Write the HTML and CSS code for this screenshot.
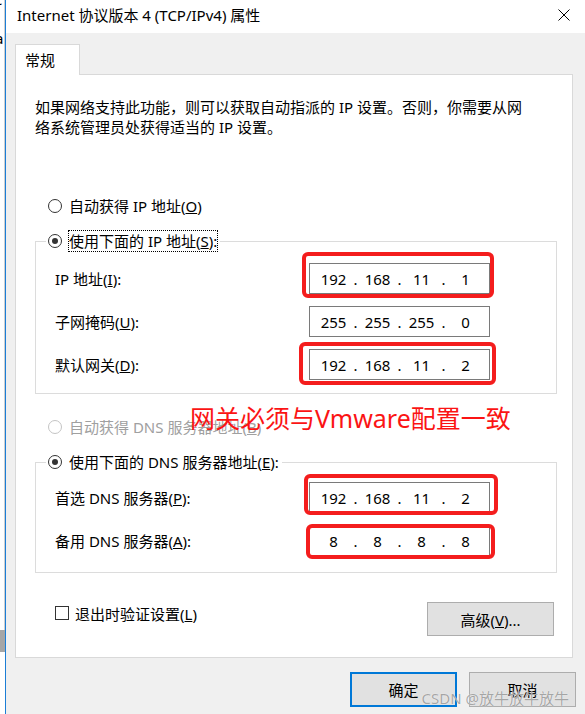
FILE: index.html
```html
<!DOCTYPE html>
<html>
<head>
    <meta charset="utf-8">
    <title>Internet 协议版本 4 (TCP/IPv4) 属性</title>
    <link rel="stylesheet" href="styles.css">
</head>
<body>
    <div class="screen">
        <div class="behind">
            <div class="behind-win">
                <span class="frag frag-c">c</span>
                <span class="frag frag-a">a</span>
            </div>
            <div class="behind-shadow"></div>
        </div>

        <div class="window">
            <div class="titlebar">
                <span class="title">Internet 协议版本 4 (TCP/IPv4) 属性</span>
                <svg class="close" width="12" height="12" viewBox="0 0 12 12">
                    <path d="M0.5 0.5 L11.5 11.5 M11.5 0.5 L0.5 11.5" stroke="#000" stroke-width="1" fill="none"/>
                </svg>
            </div>

            <div class="content">
                <div class="tabs">
                    <div class="tab">常规</div>
                </div>

                <div class="panel">
                    <p class="desc">如果网络支持此功能，则可以获取自动指派的 IP 设置。否则，你需要从网<br>络系统管理员处获得适当的 IP 设置。</p>

                    <div class="option">
                        <span class="radio"></span>
                        <span class="opt-text">自动获得 IP 地址(<u>O</u>)</span>
                    </div>

                    <div class="group">
                        <div class="option group-title">
                            <span class="radio checked"></span>
                            <span class="opt-text focus">使用下面的 IP 地址(<u>S</u>):</span>
                        </div>
                        <div class="rows">
                            <span class="label">IP 地址(<u>I</u>):</span>
                            <div class="ipbox">
                                <span class="seg">192</span><span class="dot">.</span><span class="seg">168</span><span class="dot">.</span><span class="seg">11</span><span class="dot">.</span><span class="seg">1</span>
                                <span class="mark mark-ip"></span>
                            </div>
                            <span class="label">子网掩码(<u>U</u>):</span>
                            <div class="ipbox">
                                <span class="seg">255</span><span class="dot">.</span><span class="seg">255</span><span class="dot">.</span><span class="seg">255</span><span class="dot">.</span><span class="seg">0</span>
                            </div>
                            <span class="label">默认网关(<u>D</u>):</span>
                            <div class="ipbox">
                                <span class="seg">192</span><span class="dot">.</span><span class="seg">168</span><span class="dot">.</span><span class="seg">11</span><span class="dot">.</span><span class="seg">2</span>
                                <span class="mark mark-gw"></span>
                            </div>
                        </div>
                    </div>

                    <div class="option disabled">
                        <span class="radio"></span>
                        <span class="opt-text">自动获得 DNS 服务器地址(<u>B</u>)</span>
                    </div>

                    <div class="group group-dns">
                        <div class="option group-title">
                            <span class="radio checked"></span>
                            <span class="opt-text">使用下面的 DNS 服务器地址(<u>E</u>):</span>
                        </div>
                        <div class="rows">
                            <span class="label">首选 DNS 服务器(<u>P</u>):</span>
                            <div class="ipbox">
                                <span class="seg">192</span><span class="dot">.</span><span class="seg">168</span><span class="dot">.</span><span class="seg">11</span><span class="dot">.</span><span class="seg">2</span>
                                <span class="mark mark-dns1"></span>
                            </div>
                            <span class="label">备用 DNS 服务器(<u>A</u>):</span>
                            <div class="ipbox">
                                <span class="seg">8</span><span class="dot">.</span><span class="seg">8</span><span class="dot">.</span><span class="seg">8</span><span class="dot">.</span><span class="seg">8</span>
                                <span class="mark mark-dns2"></span>
                            </div>
                        </div>
                    </div>

                    <div class="panel-foot">
                        <div class="check">
                            <span class="box"></span>
                            <span>退出时验证设置(<u>L</u>)</span>
                        </div>
                        <button class="btn btn-adv">高级(<u>V</u>)...</button>
                    </div>

                    <!-- red annotation drawn over the dialog -->
                    <div class="note">网关必须与Vmware配置一致</div>
                </div>

                <div class="actions">
                    <button class="btn btn-action btn-default">确定</button>
                    <button class="btn btn-action">取消</button>
                </div>
            </div>

            <div class="watermark">CSDN @放牛放牛放牛</div>
        </div>
    </div>
</body>
</html>
```

FILE: styles.css
```css
body {
    margin: 0;
    background: #fff;
    font-family: "Noto Sans", "Noto Sans CJK SC", sans-serif;
    font-size: 15px;
    color: #000;
}
.screen {
    display: flex;
    width: 585px;
    height: 714px;
    overflow: hidden;
}

/* sliver of the window behind */
.behind {
    width: 5px;
    flex: none;
    display: flex;
    flex-direction: column;
    overflow: hidden;
}
.behind-win {
    width: 4px;
    height: 630px;
    border-right: 1px solid #cfcfcf;
    background: #fff;
    overflow: hidden;
    display: flex;
    flex-direction: column;
}
.frag {
    display: block;
    margin-left: -5px;
    font-size: 15px;
    line-height: 16px;
}
.frag-c {
    margin-top: -9px;
}
.frag-a {
    margin-top: 23px;
}
.behind-shadow {
    height: 22px;
    background: #a6a6a6;
}

/* dialog */
.window {
    width: 580px;
    flex: none;
    box-sizing: border-box;
    border-left: 1px solid #1c7ed6;
    background: #f0f0f0;
    position: relative;
}
.titlebar {
    height: 33px;
    background: #fff;
    display: flex;
    align-items: center;
    padding: 0 15px 0 11px;
}
.title {
    font-size: 15px;
    line-height: 20px;
    margin-top: -3px;
}
.close {
    margin-left: auto;
    margin-top: -3px;
}
.content {
    padding-top: 11px;
}
.tabs {
    display: flex;
    padding-left: 9px;
}
.tab {
    width: 65px;
    height: 31px;
    box-sizing: border-box;
    border: 1px solid #d9d9d9;
    border-bottom: none;
    background: #fff;
    padding: 4px 0 0 9px;
    line-height: 22px;
    margin-bottom: -1px;
    position: relative;
    z-index: 1;
}
.panel {
    position: relative;
    width: 558px;
    margin-left: 9px;
    box-sizing: border-box;
    border: 1px solid #d9d9d9;
    background: #fff;
    padding: 22px 0 21px 0;
}
.desc {
    margin: 0;
    padding-left: 19px;
    line-height: 20px;
    white-space: nowrap;
}

/* radio rows */
.option {
    display: flex;
    align-items: center;
    height: 22px;
    margin-left: 32px;
    white-space: nowrap;
}
.option > .radio + .opt-text {
    margin-left: 6px;
}
.radio {
    width: 14px;
    height: 14px;
    box-sizing: border-box;
    border: 1px solid #333;
    border-radius: 50%;
    background: #fff;
    display: flex;
    align-items: center;
    justify-content: center;
}
.radio.checked::after {
    content: "";
    width: 6px;
    height: 6px;
    border-radius: 50%;
    background: #333;
}
.opt-text {
    line-height: 20px;
    border: 1px dotted transparent;
}
.opt-text.focus {
    border-color: #000;
}
.desc + .option {
    margin-top: 58px;
}
.option.disabled {
    margin-top: 22px;
    color: #a0a0a0;
}
.option.disabled .radio {
    border-color: #c4c4c4;
}

/* group boxes */
.group {
    width: 522px;
    margin: 24px 0 0 19px;
    box-sizing: border-box;
    border: 1px solid #dcdcdc;
    padding-bottom: 13px;
}
.group-title {
    width: max-content;
    margin: -12px 0 0 10px;
    padding: 0 2px;
    background: #fff;
}
.rows {
    display: grid;
    grid-template-columns: 254px 181px;
    grid-auto-rows: 31px;
    row-gap: 12px;
    padding-left: 19px;
    margin-top: 11px;
}
.group-dns {
    padding-bottom: 16px;
}
.group-dns .rows {
    margin-top: 9px;
}
.label {
    align-self: center;
    line-height: 20px;
    white-space: nowrap;
}
.ipbox {
    position: relative;
    display: flex;
    align-items: center;
    box-sizing: border-box;
    border: 1px solid #7a7a7a;
    background: #fff;
    padding-left: 6px;
}
.seg {
    width: 35px;
    text-align: center;
    line-height: 20px;
}
.dot {
    width: 9px;
    text-align: center;
    line-height: 20px;
}

/* red marker boxes */
.mark {
    position: absolute;
    box-sizing: border-box;
    border: 4px solid #f41d1d;
    border-radius: 6px;
}
.mark-ip {
    left: -8px;
    top: -12px;
    width: 192px;
    height: 46px;
}
.mark-gw {
    left: -11px;
    top: -8px;
    width: 197px;
    height: 43px;
}
.mark-dns1 {
    left: -6px;
    top: -9px;
    width: 194px;
    height: 41px;
}
.mark-dns2 {
    left: -4px;
    top: -2px;
    width: 189px;
    height: 35px;
}
.note {
    position: absolute;
    left: 174px;
    top: 331px;
    font-size: 25px;
    line-height: 25px;
    color: #fb1414;
    white-space: nowrap;
}

/* footer inside panel */
.panel-foot {
    display: flex;
    justify-content: space-between;
    align-items: flex-start;
    margin-top: 29px;
    padding: 0 18px 0 39px;
}
.check {
    display: flex;
    align-items: center;
    height: 22px;
    gap: 6px;
}
.box {
    width: 14px;
    height: 14px;
    box-sizing: border-box;
    border: 1px solid #333;
    background: #fff;
}
.btn {
    font-family: inherit;
    font-size: 15px;
    color: #000;
    background: #e1e1e1;
    border: 1px solid #adadad;
    padding: 0;
    box-sizing: border-box;
}
.btn-adv {
    width: 127px;
    height: 34px;
}
.actions {
    display: flex;
    justify-content: flex-end;
    gap: 12px;
    margin-top: 14px;
    padding-right: 9px;
}
.btn-action {
    width: 107px;
    height: 35px;
}
.btn-default {
    border: 2px solid #0078d7;
}
.watermark {
    position: absolute;
    right: 16px;
    bottom: 6px;
    font-size: 15px;
    line-height: 20px;
    color: rgba(150, 150, 150, 0.85);
    text-shadow: 0 0 1px #fff;
    white-space: nowrap;
}
```
